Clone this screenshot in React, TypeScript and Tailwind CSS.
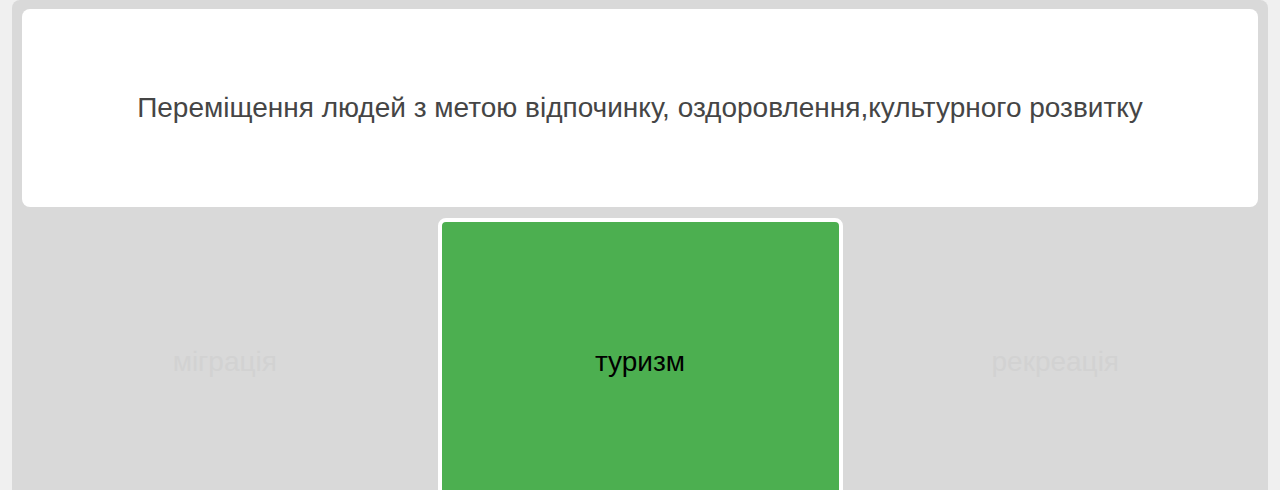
export default function App() {
  return (
    <div className="h-[490px] overflow-hidden bg-[#f0f0f0] px-3 font-['Liberation_Sans',Arial,sans-serif]">
      <div className="flex h-[560px] flex-col gap-[11px] rounded-lg bg-[#d9d9d9] px-[10px] pt-[9px]">
        <div className="flex h-[198px] items-center justify-center rounded-lg bg-white text-[28px] text-[#454545]">
          Переміщення людей з метою відпочинку, оздоровлення,культурного розвитку
        </div>
        <div className="flex">
          <div className="flex h-[288px] flex-1 items-center justify-center pr-[10px] text-[28px] text-[#d2d2d2]">
            міграція
          </div>
          <div className="flex h-[288px] w-[405px] items-center justify-center rounded-lg border-4 border-white bg-[#4caf50] text-[28px] text-black">
            туризм
          </div>
          <div className="flex h-[288px] flex-1 items-center justify-center pl-[10px] text-[28px] text-[#d2d2d2]">
            рекреація
          </div>
        </div>
      </div>
    </div>
  );
}
